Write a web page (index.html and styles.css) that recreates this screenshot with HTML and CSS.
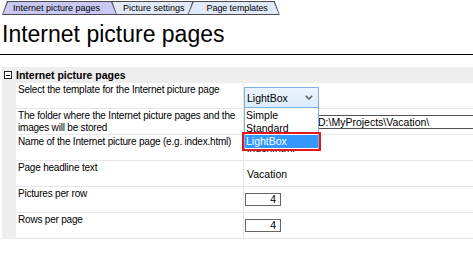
FILE: index.html
```html
<!DOCTYPE html>
<html lang="en">
<head>
    <meta charset="UTF-8">
    <title>Internet picture pages</title>
    <link rel="stylesheet" href="styles.css">
</head>
<body>
    <div class="tabs">
        <div class="tab tab-pages active"><span>Internet picture pages</span></div>
        <div class="tab tab-pictures"><span>Picture settings</span></div>
        <div class="tab tab-templates"><span>Page templates</span></div>
    </div>

    <h1>Internet picture pages</h1>

    <div class="section">
        <div class="section-head"><span class="toggle"></span>Internet picture pages</div>
        <div class="rows">
            <div class="row">
                <div class="label">Select the template for the Internet picture page</div>
                <div class="value">
                    <div class="combo">
                        <div class="combo-box">LightBox<svg class="chev" width="8" height="5" viewBox="0 0 8 5"><path d="M0.8 0.8 L4 4 L7.2 0.8" fill="none" stroke="#5a5a5a" stroke-width="1.5"/></svg></div>
                        <ul class="combo-list">
                            <li>Simple</li>
                            <li>Standard</li>
                            <li class="selected">LightBox</li>
                        </ul>
                    </div>
                </div>
            </div>
            <div class="row">
                <div class="label">The folder where the Internet picture pages and the images will be stored</div>
                <div class="value"><div class="textbox wide">D:\MyProjects\Vacation\</div></div>
            </div>
            <div class="row">
                <div class="label">Name of the Internet picture page (e.g. index.html)</div>
                <div class="value"><div class="plain">index.html</div></div>
            </div>
            <div class="row">
                <div class="label">Page headline text</div>
                <div class="value"><div class="plain">Vacation</div></div>
            </div>
            <div class="row">
                <div class="label">Pictures per row</div>
                <div class="value"><div class="textbox num">4</div></div>
            </div>
            <div class="row">
                <div class="label">Rows per page</div>
                <div class="value"><div class="textbox num">4</div></div>
            </div>
        </div>
    </div>
</body>
</html>
```

FILE: styles.css
```css
html, body { overflow: hidden; }
body { margin: 0; background: #ffffff; color: #000; font-family: "Liberation Sans", Arial, sans-serif; font-size: 10px; }

/* tab strip */
.tabs { display: flex; padding: 1px 0 0 2px; height: 14px; }
.tab { background: #4a4a4a; clip-path: polygon(0 100%, 5px 0, calc(100% - 5px) 0, 100% 100%); padding: 1px 1px 0 1px; position: relative; }
.tab span { display: block; height: 12px; line-height: 12px; font-size: 9px; background: #e1e9f6; clip-path: polygon(0 100%, 5px 0, calc(100% - 5px) 0, 100% 100%); white-space: nowrap; }
.tab.active span { background: #c8c8f2; }
.tab-pages { z-index: 3; }
.tab-pages span { padding: 0 16px 0 10px; }
.tab-pictures { z-index: 1; margin-left: -11px; }
.tab-pictures span { padding: 0 13px 0 16px; }
.tab-templates { z-index: 2; margin-left: -11px; }
.tab-templates span { padding: 0 11px 0 18px; letter-spacing: -0.1px; }

h1 { font-size: 23px; font-weight: normal; margin: 5px 0 0 2px; line-height: 28px; }

.section { border-top: 1px solid #000; margin-top: 6px; padding: 12px 0 0 2px; }
.section-head { background: #eeeeee; height: 16px; font-weight: bold; font-size: 10.5px; display: flex; align-items: center; }
.toggle { width: 6px; height: 6px; border: 1px solid #222; margin: 0 4px 0 2px; position: relative; background: #fff; }
.toggle::after { content: ""; position: absolute; left: 1px; right: 1px; top: 2.5px; height: 1px; background: #000; }

.rows { border-left: 14px solid #eeeeee; }
.row { display: grid; grid-template-columns: 227px 1fr; height: 25px; border-bottom: 1px solid #e6e6e6; }
.label { padding: 1px 0 0 2px; line-height: 12px; letter-spacing: -0.2px; }
.value { border-left: 1px solid #e6e6e6; font-size: 10.5px; }

.combo { position: relative; width: 75px; margin-top: 4px; z-index: 5; }
.combo-box { height: 19px; border: 1px solid #7cb0e2; background: linear-gradient(#ecf4fc, #dcecfc); display: flex; align-items: center; justify-content: space-between; padding: 0 5px 0 2px; }
.combo-list { position: absolute; left: 0; right: 0; top: 100%; list-style: none; margin: 0; padding: 1px 0 1px; border: 1px solid #7cb0e2; border-top: 0; background: #fff; }
.combo-list li { line-height: 13px; height: 13px; padding: 0 1px; }
.combo-list li.selected { background: #3399ff; color: #fff; outline: 2px solid #e3151f; outline-offset: 1px; }

.textbox { border: 1px solid #505050; height: 12px; line-height: 12px; white-space: nowrap; }
.textbox.wide { margin: 6px -6px 0 0; padding-left: 73px; }
.textbox.num { width: 30px; height: 11px; line-height: 11px; margin: 6px 0 0 1px; text-align: right; padding-right: 4px; border-color: #666; }
.plain { padding: 7px 0 0 3px; line-height: 13px; }
```
